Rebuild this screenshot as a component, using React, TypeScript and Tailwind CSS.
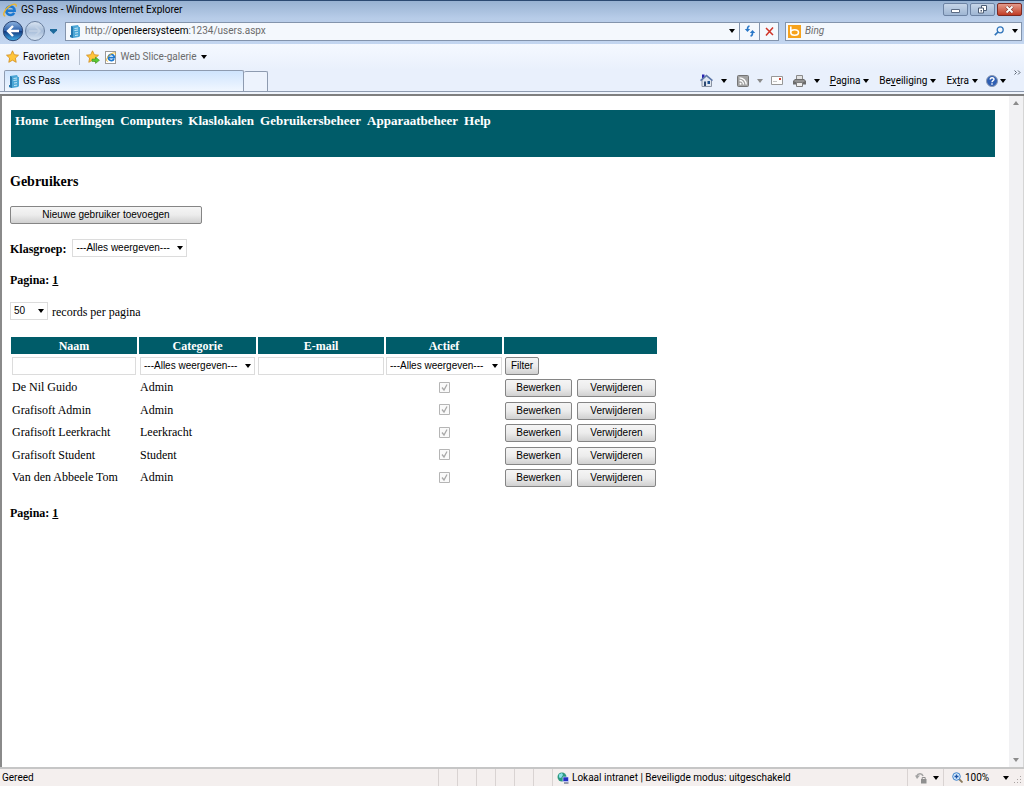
import type { ReactNode } from "react";

const users = [
  { name: "De Nil Guido", category: "Admin" },
  { name: "Grafisoft Admin", category: "Admin" },
  { name: "Grafisoft Leerkracht", category: "Leerkracht" },
  { name: "Grafisoft Student", category: "Student" },
  { name: "Van den Abbeele Tom", category: "Admin" },
];

const menu = [
  "Home",
  "Leerlingen",
  "Computers",
  "Klaslokalen",
  "Gebruikersbeheer",
  "Apparaatbeheer",
  "Help",
];

const Caret = ({ className = "text-black" }: { className?: string }) => (
  <svg className={`h-1 w-1.5 shrink-0 ${className}`} viewBox="0 0 6 4">
    <path d="M0 0h6L3 4z" fill="currentColor" />
  </svg>
);

const IeIcon = ({ className }: { className: string }) => (
  <svg className={`shrink-0 ${className}`} viewBox="0 0 16 16" fill="none">
    <path
      d="M12.8 11.2A4.9 4.9 0 1 1 13.4 8.9H4.5"
      stroke="#1c78cf"
      strokeWidth="2.8"
    />
    <path
      d="M2.6 15C-1 14.500 1.500 8 6.500 4.200S16 .2 15 4.200"
      stroke="#ecb52b"
      strokeWidth="1.6"
    />
  </svg>
);

const PageIcon = () => (
  <svg className="h-[13px] w-[11px] shrink-0" viewBox="0 0 11 13">
    <path d="M1 1 8 0l1 2h1v9l-1 1-6 1-3-1v-2h1z" fill="#4aa6d6" />
    <path d="M1 1 3 2v11l-3-1v-2h1z" fill="#2578ae" />
    <path
      d="M4.5 3.500 8 3M4.500 5.500 8 5M5 8l3-.4M5 10.500l3-.4"
      stroke="#c5e8f7"
      strokeWidth="1"
    />
  </svg>
);

const Star = ({ plus = false }: { plus?: boolean }) => (
  <svg className="h-[14px] w-[14px] shrink-0" viewBox="0 0 14 14">
    <path
      d="m6.5.8 1.800 3.900 4.200.5-3.100 2.900.8 4.200-3.700-2.100-3.700 2.100.8-4.200L.5 5.200l4.200-.5z"
      fill="#ffc53a"
      stroke="#d08c1c"
      strokeWidth=".8"
    />
    {plus && (
      <path
        d="M6 9h3.500V7l4 3.300-4 3.200v-2H6z"
        fill="#58c936"
        stroke="#2e8a1c"
        strokeWidth=".5"
      />
    )}
  </svg>
);

const WindowButton = ({
  label,
  className,
  children,
}: {
  label: string;
  className: string;
  children: ReactNode;
}) => (
  <button
    aria-label={label}
    className={`flex h-[13px] w-[25px] items-center justify-center rounded-[2px] border ${className}`}
  >
    <svg className="h-[9px] w-[11px]" viewBox="0 0 11 9">
      {children}
    </svg>
  </button>
);

const TitleBar = () => (
  <div className="flex h-[18px] items-center gap-1 border-t border-[#2c4a72] bg-linear-to-b from-[#98b2d2] to-[#b7cce8] pr-0.5 pl-[3px]">
    <IeIcon className="h-[14px] w-[14px]" />
    <span className="grow">GS Pass - Windows Internet Explorer</span>
    <div className="flex gap-[2px]">
      <WindowButton
        label="Minimaliseren"
        className="border-[#6d83a3] bg-linear-to-b from-[#c6d5e8] to-[#9fb6d3]"
      >
        <path d="M1.5 4.500h8v3h-8z" fill="#fff" stroke="#5c6c84" />
      </WindowButton>
      <WindowButton
        label="Verkleinen"
        className="border-[#6d83a3] bg-linear-to-b from-[#c6d5e8] to-[#9fb6d3]"
      >
        <path d="M4.5.5h5v5h-5z" fill="#fff" stroke="#4c5c74" />
        <path d="M1.5 3h5v5h-5z" fill="#fff" stroke="#4c5c74" />
        <path d="M3.5 5H5v1.500H3.500z" fill="#4c5c74" />
      </WindowButton>
      <WindowButton
        label="Sluiten"
        className="border-[#7c2a22] bg-linear-to-b from-[#e39a8b] to-[#c03a22]"
      >
        <path
          d="m2.5 1.500 6 6M8.500 1.500l-6 6"
          stroke="#6d2a22"
          strokeWidth="3"
        />
        <path
          d="m2.5 1.500 6 6M8.500 1.500l-6 6"
          stroke="#fff"
          strokeWidth="1.8"
        />
      </WindowButton>
    </div>
  </div>
);

const AddressBar = () => (
  <div className="flex h-[26px] items-center bg-linear-to-b from-[#b7cce8] to-[#c3d6f0] pr-0.5 pl-[2px]">
    <button aria-label="Vorige">
      <svg className="h-[22px] w-[22px]" viewBox="0 0 22 22">
        <defs>
          <linearGradient id="back" x2="0" y2="1">
            <stop offset="0" stopColor="#8fb4e0" />
            <stop offset=".48" stopColor="#2f62ab" />
            <stop offset=".52" stopColor="#123a80" />
            <stop offset="1" stopColor="#3fb0ea" />
          </linearGradient>
        </defs>
        <circle cx="11" cy="11" r="9.7" fill="url(#back)" stroke="#2c4673" />
        <path
          d="M17 11H7M11 6l-5 5 5 5"
          stroke="#fff"
          strokeWidth="2.4"
          fill="none"
        />
      </svg>
    </button>
    <button aria-label="Volgende">
      <svg className="h-[22px] w-[22px]" viewBox="0 0 22 22">
        <defs>
          <linearGradient id="next" x2="0" y2="1">
            <stop offset="0" stopColor="#dbe6f3" />
            <stop offset=".5" stopColor="#a5bbd8" />
            <stop offset="1" stopColor="#dce8f5" />
          </linearGradient>
        </defs>
        <circle cx="11" cy="11" r="9.5" fill="url(#next)" stroke="#6b809f" />
        <path
          d="M5 11h10M11 6l5 5-5 5"
          stroke="#c3d2e5"
          strokeWidth="1.6"
          fill="none"
        />
      </svg>
    </button>
    <button aria-label="Recente pagina's" className="ml-1">
      <svg className="h-[5px] w-[7px]" viewBox="0 0 7 5">
        <path d="M0 0h7v1.500L3.500 5 0 1.500z" fill="#1e6a9c" />
      </svg>
    </button>
    <div className="ml-2 flex h-[19px] grow items-center border border-[#8394ac] bg-[#f4f8fd] pl-1">
      <PageIcon />
      <a
        href="http://openleersysteem:1234/users.aspx"
        className="ml-1 grow text-[#6b6b6b]"
      >
        http://<span className="text-black">openleersysteem</span>
        :1234/users.aspx
      </a>
      <button aria-label="Adreslijst" className="px-1">
        <Caret />
      </button>
      <button
        aria-label="Vernieuwen"
        className="flex h-full w-5 items-center justify-center border-l border-[#8394ac]"
      >
        <svg className="h-3 w-3" viewBox="0 0 12 12" fill="none">
          <path
            d="M5.500 1C3 1.500 3.500 4 3.500 5M6.500 11C9 10.500 8.500 8 8.500 7"
            stroke="#2a78c8"
            strokeWidth="1.6"
          />
          <path
            d="M.8 4h5.400L3.500 7zM5.800 8h5.400L8.500 5z"
            fill="#2a78c8"
          />
        </svg>
      </button>
      <button
        aria-label="Stoppen"
        className="flex h-full w-[19px] items-center justify-center border-l border-[#8394ac]"
      >
        <svg className="h-[9px] w-[9px]" viewBox="0 0 9 9">
          <path d="m1 1 7 7M8 .5l-7 8" stroke="#cf3327" strokeWidth="1.5" />
        </svg>
      </button>
    </div>
    <div className="ml-1.5 flex h-[19px] w-[237px] items-center border border-[#8394ac] bg-[#f4f8fd] pr-[3px] pl-0.5">
      <svg className="h-[13px] w-[13px] shrink-0" viewBox="0 0 13 13">
        <rect width="13" height="13" fill="#f6a21c" />
        <path
          d="M2.800 1.500v6.500M2.800 7.500c0-3.700 7.700-3.700 7.700 0s-7.700 3.700-7.700 0z"
          stroke="#fff"
          strokeWidth="1.6"
          fill="none"
        />
      </svg>
      <input
        aria-label="Zoeken"
        placeholder="Bing"
        className="ml-1 min-w-0 grow italic outline-none placeholder:text-[#6b6b6b]"
      />
      <button aria-label="Zoek">
        <svg className="h-[10px] w-[10px]" viewBox="0 0 10 10" fill="none">
          <circle cx="6.2" cy="3.800" r="3" stroke="#2f74ba" strokeWidth="1.3" />
          <path d="M4 6 .8 9.200" stroke="#2f74ba" strokeWidth="1.7" />
        </svg>
      </button>
      <button aria-label="Zoekopties" className="ml-2">
        <Caret />
      </button>
    </div>
  </div>
);

const FavoritesBar = () => (
  <div className="flex h-[26px] items-center bg-linear-to-b from-[#f5f9ff] to-[#e9f0fc] pl-1.5">
    <button className="flex items-center gap-[3px]">
      <Star />
      Favorieten
    </button>
    <div className="mr-1.5 ml-[10px] h-4 w-px bg-[#b5bfce]" />
    <button aria-label="Toevoegen aan favorieten">
      <Star plus />
    </button>
    <button className="ml-[5px] flex items-center gap-1 text-[#6b6b6b]">
      <span className="flex h-[13px] w-[11px] items-center justify-center border border-[#9a9a9a] bg-white">
        <IeIcon className="h-[10px] w-[10px]" />
      </span>
      Web Slice-galerie
      <Caret />
    </button>
  </div>
);

const TabBar = () => (
  <div className="flex h-[22px] items-end border-b border-[#8e9bb0] bg-[#e9f0fc]">
    <button className="ml-1 flex h-[21px] w-[240px] items-center gap-[3px] rounded-t-[2px] border border-b-0 border-[#8e9bb0] bg-linear-to-b from-[#cfe4fd] to-[#f1f7ff] pl-1">
      <PageIcon />
      GS Pass
    </button>
    <button
      aria-label="Nieuw tabblad"
      className="h-5 w-6 rounded-t-[2px] border border-b-0 border-l-0 border-[#8e9bb0] bg-[#edf3fd]"
    />
    <div className="grow" />
    <div className="flex h-full items-center pr-[3px]">
      <button aria-label="Startpagina">
        <svg className="h-[13px] w-[13px]" viewBox="0 0 13 13">
          <path d="M2 .5h2.500v4H2z" fill="#2a24b0" />
          <path
            d="M2 6v6.500h9.500V6l-5-4z"
            fill="#dfe6f0"
            stroke="#8a93a3"
          />
          <path
            d="m.5 6.700 6-5.200 6 5.200"
            stroke="#5f79aa"
            fill="none"
            strokeWidth="1.6"
          />
          <path d="M4 7.500h2V12H4z" fill="#2f4a72" />
          <path d="M7.500 7h2.500v3H7.500z" fill="#1c4f8e" />
        </svg>
      </button>
      <button aria-label="Startpagina-opties" className="ml-2">
        <Caret />
      </button>
      <button aria-label="Feeds" className="ml-[10px]">
        <svg className="h-3 w-3" viewBox="0 0 12 12" fill="none">
          <rect
            x=".5"
            y=".5"
            width="11"
            height="11"
            rx="1"
            fill="#a3a3a3"
            stroke="#757575"
          />
          <path
            d="M2.500 5.500a4 4 0 0 1 4 4M2.500 2.800a6.700 6.700 0 0 1 6.700 6.700"
            stroke="#fff"
            strokeWidth="1.3"
          />
          <circle cx="3.5" cy="8.700" r="1" fill="#fff" />
        </svg>
      </button>
      <button aria-label="Feedopties" className="ml-2">
        <Caret className="text-[#8a8a8a]" />
      </button>
      <button aria-label="E-mail lezen" className="ml-2">
        <svg className="h-[9px] w-3" viewBox="0 0 12 9">
          <path d="M.5.5h11v8H.5z" fill="#fdfdfd" stroke="#979797" />
          <path d="M8 2h2v2H8z" fill="#d44332" />
          <path d="M2 5.500h4" stroke="#c3c3c3" />
        </svg>
      </button>
      <button aria-label="Afdrukken" className="ml-[10px]">
        <svg className="h-3 w-[13px]" viewBox="0 0 13 12">
          <path d="M3.500.5h6v4h-6z" fill="#e2e2e2" stroke="#8a8a8a" />
          <path d="M2 4h9l2 2v3.500H0V6z" fill="#6b6b6b" />
          <path d="M3.500 7.500h6v4h-6z" fill="#eee" stroke="#7c7c7c" />
          <path d="M1.500 6h10" stroke="#b9b9b9" />
        </svg>
      </button>
      <button aria-label="Afdrukopties" className="ml-2">
        <Caret />
      </button>
      <button className="ml-[10px] flex items-center gap-[3px]">
        <span>
          <u>P</u>agina
        </span>
        <Caret />
      </button>
      <button className="ml-[10px] flex items-center gap-[3px]">
        <span>
          Be<u>v</u>eiliging
        </span>
        <Caret />
      </button>
      <button className="ml-[10px] flex items-center gap-[3px]">
        <span>
          Ex<u>t</u>ra
        </span>
        <Caret />
      </button>
      <button aria-label="Help" className="ml-2 flex items-center gap-0.5">
        <svg className="h-3 w-3" viewBox="0 0 12 12" fill="none">
          <circle cx="6" cy="6" r="5.5" fill="#2f5fb3" stroke="#8b99b3" />
          <path
            d="M4.200 4.600c0-2.600 3.800-2.400 3.800-.3C8 5.700 6 5.500 6 7.200M6 8.200v1.500"
            stroke="#fff"
            strokeWidth="1.4"
          />
        </svg>
        <Caret />
      </button>
      <button aria-label="Meer" className="ml-2 self-start">
        <svg className="h-[5px] w-[7px]" viewBox="0 0 7 5" fill="none">
          <path d="m.5.5 2 2-2 2M4 .5l2 2-2 2" stroke="#5b6472" />
        </svg>
      </button>
    </div>
  </div>
);

const FormButton = ({
  children,
  className,
}: {
  children: ReactNode;
  className: string;
}) => (
  <button
    className={`h-[18px] rounded-[2px] border border-[#858585] bg-linear-to-b from-[#f5f5f5] via-[#ececec] to-[#d0d0d0] font-['Liberation_Sans',sans-serif] text-[10px] leading-4 ${className}`}
  >
    {children}
  </button>
);

const Select = ({
  id,
  label,
  value,
  className,
}: {
  id: string;
  label?: string;
  value: string;
  className: string;
}) => (
  <span className={`relative items-center ${className}`}>
    <select
      id={id}
      aria-label={label}
      className="h-[18px] w-full appearance-none border border-[#dcdcdc] bg-white pl-[3px] font-['Liberation_Sans',sans-serif] text-[10px] leading-4"
    >
      <option>{value}</option>
    </select>
    <span className="pointer-events-none absolute right-1 flex">
      <Caret />
    </span>
  </span>
);

const Pager = () => (
  <p className="mt-[15px] text-[12px] leading-4 font-bold">
    Pagina:{" "}
    <a href="#1" className="underline">
      1
    </a>
  </p>
);

const UserTable = () => (
  <table className="mt-[15px] -ml-px table-fixed border-separate border-spacing-[2px] text-[12px] leading-4">
    <colgroup>
      <col className="w-[126px]" />
      <col className="w-[117px]" />
      <col className="w-[126px]" />
      <col className="w-[116px]" />
      <col className="w-[153px]" />
    </colgroup>
    <thead>
      <tr className="h-[17px] bg-[#005c69] text-white">
        <th className="p-0">Naam</th>
        <th className="p-0">Categorie</th>
        <th className="p-0">E-mail</th>
        <th className="p-0">Actief</th>
        <th className="p-0" aria-label="Acties" />
      </tr>
    </thead>
    <tbody>
      <tr className="h-5">
        <td className="px-px py-0">
          <input
            aria-label="Naam"
            className="block h-[18px] w-full border border-[#dcdcdc] px-1"
          />
        </td>
        <td className="px-px py-0">
          <Select
            id="categorie"
            label="Categorie"
            value="---Alles weergeven---"
            className="flex w-full"
          />
        </td>
        <td className="p-0">
          <input
            aria-label="E-mail"
            className="block h-[18px] w-full border border-[#dcdcdc] px-1"
          />
        </td>
        <td className="p-0">
          <Select
            id="actief"
            label="Actief"
            value="---Alles weergeven---"
            className="flex w-full"
          />
        </td>
        <td className="py-0 pr-0 pl-px">
          <FormButton className="block w-[34px]">Filter</FormButton>
        </td>
      </tr>
      {users.map((user) => (
        <tr key={user.name} className="h-5 odd:h-[21px]">
          <td className="px-px pt-0 pb-0.5">{user.name}</td>
          <td className="px-px pt-0 pb-0.5">{user.category}</td>
          <td className="p-0" />
          <td className="pt-0 pb-0.5">
            <input
              type="checkbox"
              aria-label={`${user.name} actief`}
              checked
              disabled
              readOnly
              className="sr-only"
            />
            <svg
              className="mx-auto h-[11px] w-[11px]"
              viewBox="0 0 11 11"
              fill="none"
            >
              <path d="M.5.5h10v10H.5z" fill="#fafafa" stroke="#b5b5b5" />
              <path
                d="m3 5.500 2 2.500 3-5.500"
                stroke="#a9a9a9"
                strokeWidth="1.3"
              />
            </svg>
          </td>
          <td className="py-0 pr-0 pl-px">
            <div className="flex gap-[5px]">
              <FormButton className="w-[67px]">Bewerken</FormButton>
              <FormButton className="w-[79px]">Verwijderen</FormButton>
            </div>
          </td>
        </tr>
      ))}
    </tbody>
  </table>
);

const Scrollbar = () => (
  <div className="flex w-[15px] shrink-0 flex-col items-center justify-between border-r border-[#d5d5d5] bg-[#f1f1f3] py-[5px]">
    <Caret className="rotate-180 text-[#8b8b8b]" />
    <Caret className="text-[#8b8b8b]" />
  </div>
);

const StatusBar = () => (
  <footer className="flex h-[19px] items-stretch border-t-2 border-[#c6c6c6] bg-[#f4efee]">
    <span className="grow self-center pl-[2px]">Gereed</span>
    {[1, 2, 3, 4, 5, 6].map((pane) => (
      <span key={pane} className="w-[19px] border-l border-[#d9d3d2]" />
    ))}
    <div className="flex w-[355px] items-center gap-[3px] border-l border-[#d9d3d2] pl-1">
      <svg className="h-3 w-3 shrink-0" viewBox="0 0 12 12">
        <circle cx="5" cy="5" r="4.500" fill="#2d9a80" />
        <path d="M2 2.500 5 1l1 2-2 3-2-.5z" fill="#8be0ea" />
        <path
          d="M6 5h5.500v4.500H6z"
          fill="#2230c4"
          stroke="#dfe4ff"
          strokeWidth=".6"
        />
        <path d="M7 10.500h4.500v1H7z" fill="#3c466a" />
      </svg>
      Lokaal intranet | Beveiligde modus: uitgeschakeld
    </div>
    <button
      aria-label="Beveiligde modus"
      className="flex w-9 items-center gap-1.5 border-l border-[#d9d3d2] pl-[7px]"
    >
      <svg className="h-3 w-3" viewBox="0 0 12 12" fill="none">
        <path
          d="M1.500 4.500C3 1 7 1 8 4"
          stroke="#a3a3a3"
          strokeWidth="1.6"
        />
        <path d="M0 3.500h5L2 7z" fill="#a3a3a3" />
        <path d="M6 7h5.500v4.500H6z" fill="#8f8f8f" />
        <path d="M7.200 7V5.500h3V7" stroke="#8f8f8f" />
      </svg>
      <Caret />
    </button>
    <button className="flex w-[66px] items-center border-l border-[#d9d3d2] pl-2">
      <svg
        className="mr-0.5 h-[11px] w-[11px]"
        viewBox="0 0 11 11"
        fill="none"
      >
        <path d="m6.500 6.500 4 4" stroke="#8a7a5c" strokeWidth="1.8" />
        <circle cx="4.500" cy="4.500" r="3.800" fill="#d5eafb" stroke="#3f83cb" />
        <path
          d="M2.500 4.500h4M4.500 2.500v4"
          stroke="#1d54a8"
          strokeWidth="1.3"
        />
      </svg>
      <span className="grow text-left">100%</span>
      <Caret />
    </button>
    <div className="flex w-[15px] items-end justify-end p-0.5">
      <svg className="h-2 w-2" viewBox="0 0 8 8">
        <path
          d="M6 0h1v1H6zM3 3h1v1H3zM6 3h1v1H6zM0 6h1v1H0zM3 6h1v1H3zM6 6h1v1H6z"
          fill="#a9a3a2"
        />
      </svg>
    </div>
  </footer>
);

export default function App() {
  return (
    <div className="flex min-h-screen flex-col bg-white font-['Roboto',sans-serif] text-[10px] leading-3 text-black">
      <header>
        <TitleBar />
        <AddressBar />
        <FavoritesBar />
        <TabBar />
        <div className="h-[4px] border-b-2 border-[#7f7f7f] bg-[#eef3fb]" />
      </header>
      <div className="flex grow border-l-2 border-[#8a8a8a]">
        <main className="grow pt-[14px] pr-[14px] pl-2 font-['Liberation_Serif',serif]">
          <nav className="ml-px h-[47px] bg-[#005c69] px-1 pt-[3px]">
            <ul className="flex gap-1.5 text-[13px] leading-4 font-bold text-white">
              {menu.map((item) => (
                <li key={item}>
                  <a href={`#${item}`}>{item}</a>
                </li>
              ))}
            </ul>
          </nav>
          <h1 className="mt-[15px] text-[14px] leading-5 font-bold">
            Gebruikers
          </h1>
          <FormButton className="mt-[14px] block w-48">
            Nieuwe gebruiker toevoegen
          </FormButton>
          <div className="mt-[15px] flex items-end gap-1.5 text-[12px] leading-4">
            <label htmlFor="klasgroep" className="font-bold">
              Klasgroep:
            </label>
            <Select
              id="klasgroep"
              value="---Alles weergeven---"
              className="flex w-[115px]"
            />
          </div>
          <Pager />
          <div className="mt-[14px] flex items-end gap-1 text-[12px] leading-4">
            <Select id="records" value="50" className="flex w-[38px]" />
            <label htmlFor="records">records per pagina</label>
          </div>
          <UserTable />
          <Pager />
        </main>
        <Scrollbar />
      </div>
      <StatusBar />
    </div>
  );
}
